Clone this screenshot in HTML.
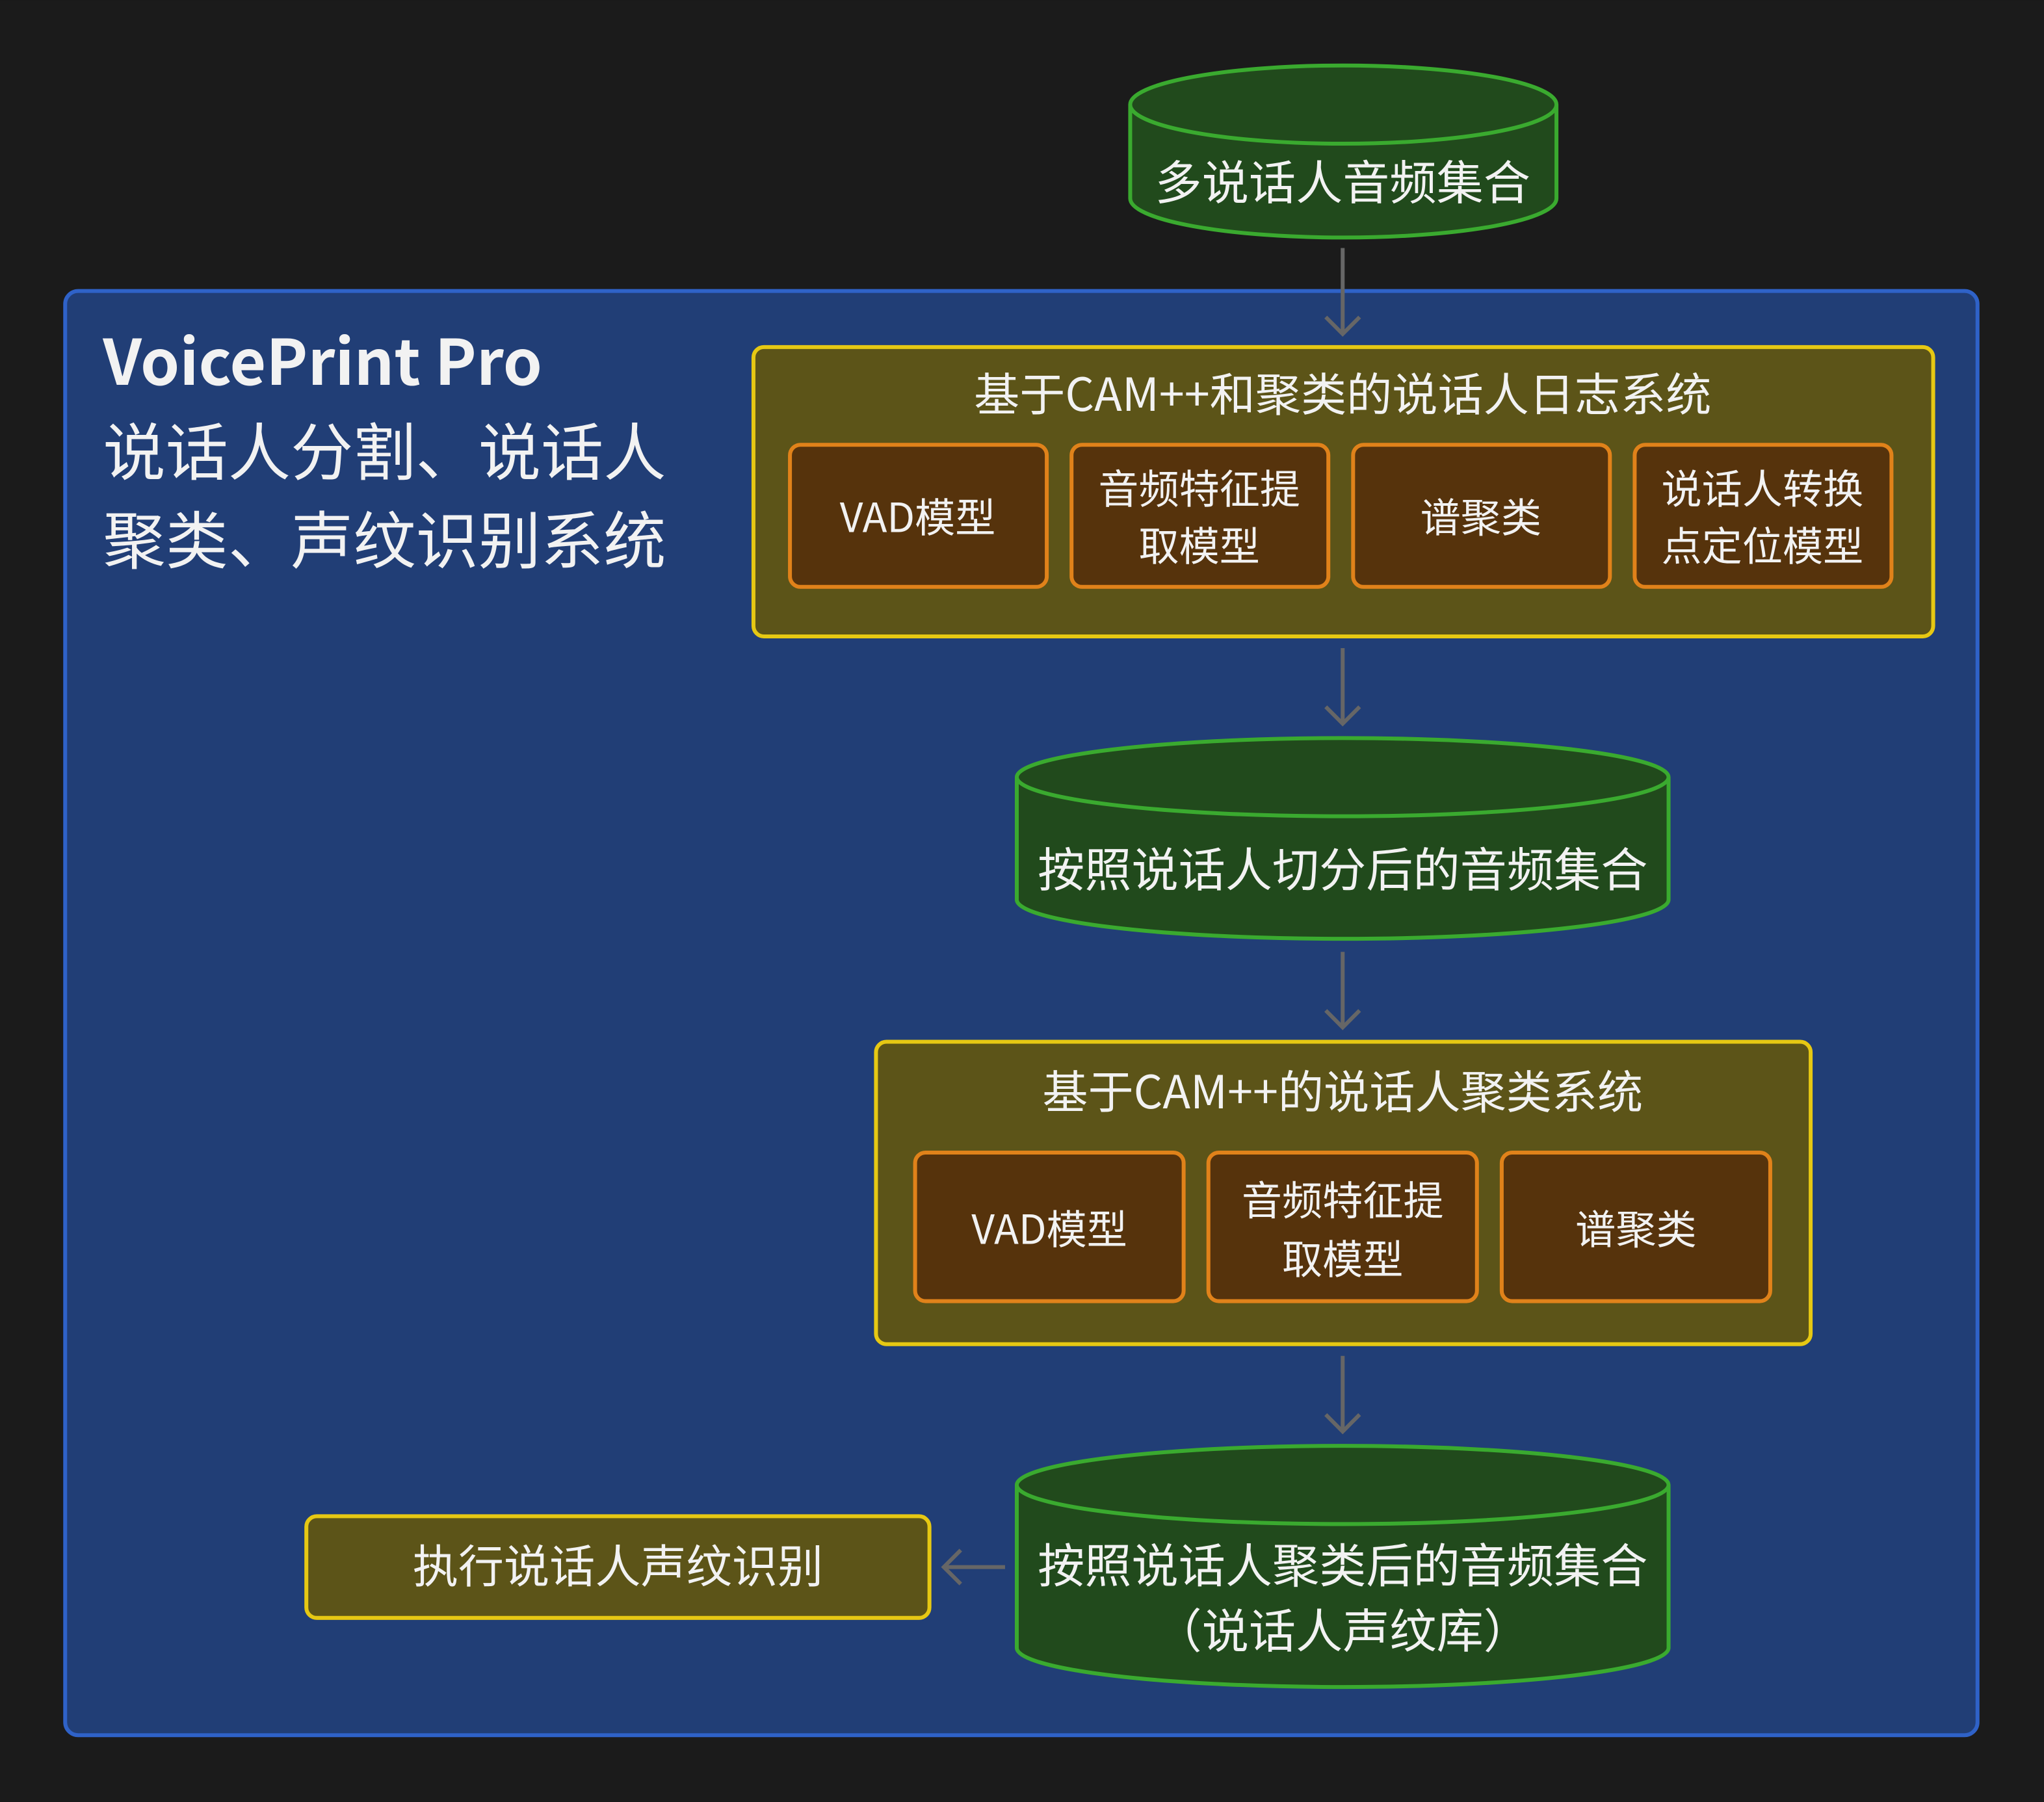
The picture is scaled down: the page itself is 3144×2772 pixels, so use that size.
<!DOCTYPE html>
<html><head><meta charset="utf-8"><style>
html,body{margin:0;padding:0;background:#1b1b1b;}
svg{display:block}
text{font-family:"Noto Sans CJK SC","Liberation Sans",sans-serif;fill:#f2f2f2;}
</style></head><body>
<svg width="3144" height="2772" viewBox="0 0 1568 1382" xmlns="http://www.w3.org/2000/svg">
<rect width="1568" height="1382" fill="#1b1b1b"/>
<rect x="50" y="223" width="1467" height="1108" rx="10" fill="#213e76" stroke="#2f62c8" stroke-width="3"/>
<text x="79" y="295" font-size="48" font-weight="bold">VoicePrint Pro</text>
<text x="79" y="364" font-size="48">说话人分割、说话人</text>
<text x="79" y="432" font-size="48">聚类、声纹识别系统</text>

<g fill="#214a1c" stroke="#3aaa2f" stroke-width="3">
<path d="M867 80 L867 152 A163.5 30 0 0 0 1194 152 L1194 80"/>
<ellipse cx="1030.5" cy="80" rx="163.5" ry="30"/>
<path d="M780 596 L780 690 A250 30 0 0 0 1280 690 L1280 596"/>
<ellipse cx="1030" cy="596" rx="250" ry="30"/>
<path d="M780 1139 L780 1264 A250 30 0 0 0 1280 1264 L1280 1139"/>
<ellipse cx="1030" cy="1139" rx="250" ry="30"/>
</g>
<g font-size="36" text-anchor="middle">
<text x="1030" y="153">多说话人音频集合</text>
<text x="1030" y="680">按照说话人切分后的音频集合</text>
<text x="1030" y="1214">按照说话人聚类后的音频集合</text>
<text x="1030" y="1264">（说话人声纹库）</text>
</g>

<g stroke="#666" stroke-width="3" fill="none">
<path d="M1030 190 V256 M1017 243 L1030 256 L1043 243"/>
<path d="M1030 497 V555 M1017 542 L1030 555 L1043 542"/>
<path d="M1030 730 V788 M1017 775 L1030 788 L1043 775"/>
<path d="M1030 1040 V1098 M1017 1085 L1030 1098 L1043 1085"/>
<path d="M771 1202 H724 M737 1189 L724 1202 L737 1215"/>
</g>

<g fill="#5c5418" stroke="#e6c813" stroke-width="3">
<rect x="578" y="266" width="905" height="222" rx="8"/>
<rect x="672" y="799" width="717" height="232" rx="8"/>
<rect x="235" y="1163" width="478" height="78" rx="8"/>
</g>
<g fill="#56330c" stroke="#e0821a" stroke-width="3">
<rect x="606" y="341" width="197" height="109" rx="8"/>
<rect x="822" y="341" width="197" height="109" rx="8"/>
<rect x="1038" y="341" width="197" height="109" rx="8"/>
<rect x="1254" y="341" width="197" height="109" rx="8"/>
<rect x="702" y="884" width="206" height="114" rx="8"/>
<rect x="927" y="884" width="206" height="114" rx="8"/>
<rect x="1152" y="884" width="206" height="114" rx="8"/>
</g>
<g font-size="35" text-anchor="middle">
<text x="1030" y="315">基于CAM++和聚类的说话人日志系统</text>
<text x="1030" y="850">基于CAM++的说话人聚类系统</text>
<text x="474" y="1214">执行说话人声纹识别</text>
</g>
<g font-size="31" text-anchor="middle">
<text x="704" y="408">VAD模型</text>
<text x="920" y="386">音频特征提</text>
<text x="920" y="430">取模型</text>
<text x="1136" y="408">谱聚类</text>
<text x="1352" y="386">说话人转换</text>
<text x="1352" y="430">点定位模型</text>
<text x="805" y="954">VAD模型</text>
<text x="1030" y="932">音频特征提</text>
<text x="1030" y="977">取模型</text>
<text x="1255" y="954">谱聚类</text>
</g>
</svg>
</body></html>
